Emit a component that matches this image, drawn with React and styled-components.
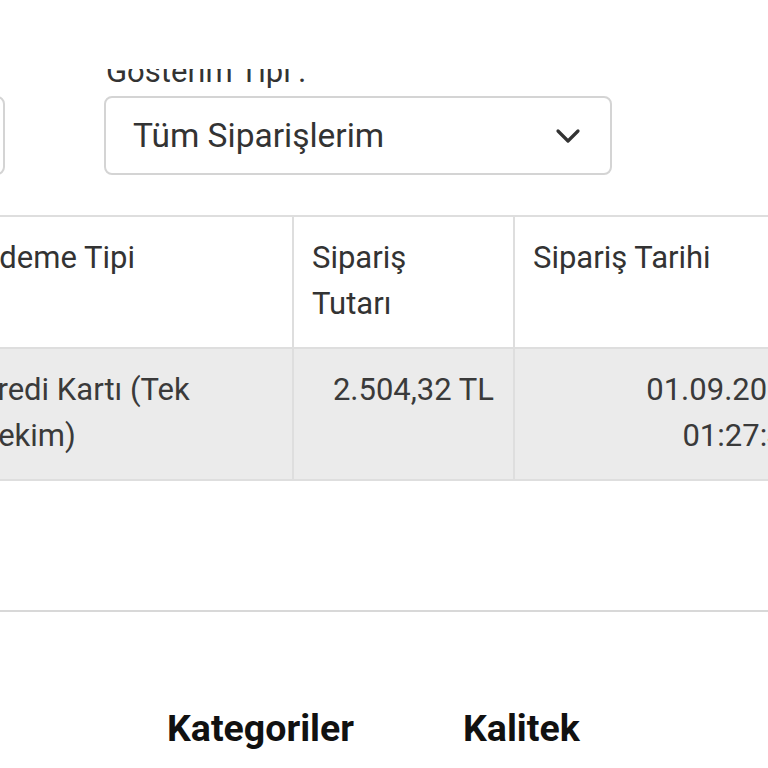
import React from "react";
import styled, { createGlobalStyle } from "styled-components";

const GlobalStyle = createGlobalStyle`
  body {
    margin: 0;
    background: #fff;
    font-family: Roboto, "Noto Sans", "Liberation Sans", sans-serif;
    color: #333;
  }
`;

const orders = [
  {
    payment: "Kredi Kartı (Tek Çekim)",
    total: "2.504,32 TL",
    date: "01.09.2023 01:27:45",
    status: "Onaylandı"
  }
];

export default function App() {
  return (
    <>
      <GlobalStyle />
      <TopBar />
      <Page>
        <FilterRow>
          <Field width={300} style={{ marginLeft: -295 }}>
            <Label>Sipariş Durumu :</Label>
            <Select>
              <span>Tümü</span>
            </Select>
          </Field>
          <Field width={508}>
            <Label>Gösterim Tipi :</Label>
            <Select>
              <span>Tüm Siparişlerim</span>
              <svg width="26" height="16" viewBox="0 0 26 16" fill="none">
                <path
                  d="M3 3 L13 13 L23 3"
                  stroke="#333"
                  strokeWidth="3.2"
                  strokeLinecap="round"
                  strokeLinejoin="round"
                />
              </svg>
            </Select>
          </Field>
        </FilterRow>

        <Scroller>
          <Table>
            <colgroup>
              <col style={{ width: 334 }} />
              <col style={{ width: 221 }} />
              <col style={{ width: 308 }} />
              <col style={{ width: 240 }} />
            </colgroup>
            <thead>
              <tr>
                <Th>Ödeme Tipi</Th>
                <Th>Sipariş Tutarı</Th>
                <Th>Sipariş Tarihi</Th>
                <Th>Durum</Th>
              </tr>
            </thead>
            <tbody>
              {orders.map(o => (
                <Row key={o.date}>
                  <Td>{o.payment}</Td>
                  <Td right>{o.total}</Td>
                  <Td right>{o.date}</Td>
                  <Td>{o.status}</Td>
                </Row>
              ))}
            </tbody>
          </Table>
        </Scroller>

        <Divider />

        <Footer>
          <FooterTitle>Kategoriler</FooterTitle>
          <FooterTitle>Kalitek</FooterTitle>
        </Footer>
      </Page>
    </>
  );
}

const TopBar = styled.div`
  position: fixed;
  top: 0;
  left: 0;
  right: 0;
  height: 69px;
  background: #fff;
  z-index: 10;
`;

const Page = styled.div`
  padding-top: 54px;
  overflow: hidden;
  height: 768px;
  box-sizing: border-box;
`;

const FilterRow = styled.div`
  display: flex;
  gap: 99px;
`;

const Field = styled.div`
  display: flex;
  flex-direction: column;
  flex: 0 0 ${p => p.width}px;
`;

const Label = styled.div`
  font-size: 31px;
  line-height: 36px;
  color: #333;
  margin-bottom: 6px;
  white-space: nowrap;
  padding-left: 2px;
`;

const Select = styled.div`
  box-sizing: border-box;
  height: 79px;
  border: 2px solid #d4d4d4;
  border-radius: 8px;
  display: flex;
  align-items: center;
  justify-content: space-between;
  padding: 0 29px 0 27px;
  font-size: 33.5px;
  color: #333;
  background: #fff;
`;

const Scroller = styled.div`
  margin-top: 40px;
  overflow: hidden;
`;

const Table = styled.table`
  margin-left: -42px;
  border-collapse: collapse;
  table-layout: fixed;
  width: 1103px;
  border-top: 2px solid #dedede;
`;

const Th = styled.th`
  border: 2px solid #dedede;
  border-top: none;
  padding: 18px 32px 20px 18px;
  font-size: 31px;
  line-height: 46px;
  font-weight: 400;
  color: #333;
  text-align: left;
  vertical-align: top;
`;

const Row = styled.tr`
  background: #ebebeb;
`;

const Td = styled.td`
  border: 2px solid #dedede;
  padding: 18px 19px 20px 18px;
  font-size: 31px;
  line-height: 46px;
  color: #3a3a3a;
  text-align: ${p => (p.right ? "right" : "left")};
  vertical-align: top;
`;

const Divider = styled.hr`
  margin: 129px 0 0;
  border: none;
  border-top: 2px solid #d8d8d8;
`;

const Footer = styled.div`
  display: flex;
  gap: 109px;
  padding: 94px 0 0 167px;
`;

const FooterTitle = styled.h3`
  margin: 0;
  font-size: 37.5px;
  line-height: 45px;
  font-weight: 700;
  color: #111;
`;
